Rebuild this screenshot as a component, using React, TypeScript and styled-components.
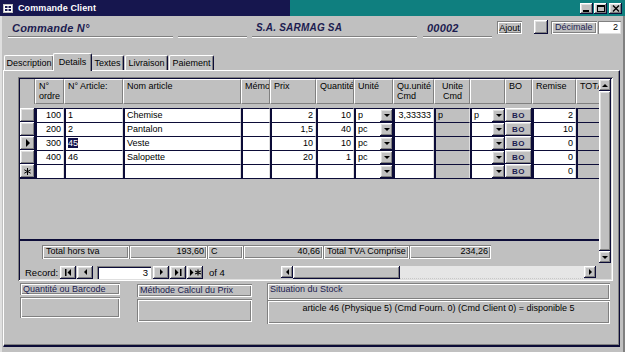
import React from 'react';
import styled, { createGlobalStyle, css } from 'styled-components';

const DARK = '#0c0c38';
const GREY = '#c0c0c0';
const SHADOW = '#808080';
const LIGHT = '#dfdfdf';

const GlobalStyle = createGlobalStyle`
  html, body { margin: 0; padding: 0; background: ${GREY}; }
  body { font-family: "Liberation Sans", Arial, sans-serif; font-size: 9px; color: #000; }
  * { box-sizing: border-box; }
`;

const raised = css`
  box-shadow: inset -1px -1px ${DARK}, inset 1px 1px #fff, inset -2px -2px ${SHADOW}, inset 2px 2px ${LIGHT};
`;
const sunken = css`
  box-shadow: inset 1px 1px ${SHADOW}, inset -1px -1px #fff, inset 2px 2px ${DARK}, inset -2px -2px ${LIGHT};
`;
const etched = css`
  box-shadow: inset 1px 1px ${SHADOW}, inset -1px -1px #fff, inset 2px 2px #fff, inset -2px -2px ${SHADOW};
`;

const Window = styled.div`
  width: 625px;
  height: 352px;
  overflow: hidden;
  background: ${GREY};
  display: flex;
  flex-direction: column;
`;

const TitleBar = styled.div`
  height: 16px;
  flex: none;
  display: flex;
  align-items: center;
  padding: 0 3px 0 3px;
  background: linear-gradient(to right, #16164e 0, #16164e 290px, #0f7f7f 290px, #0f7f7f 100%);
  color: #fff;
  font-weight: bold;
  font-size: 9px;
  gap: 5px;
`;

const TitleText = styled.span`
  flex: 1;
  letter-spacing: 0.1px;
`;

const TitleButtons = styled.div`
  display: flex;
  gap: 1px;
`;

const TitleButton = styled.div<{ $gapLeft?: number }>`
  width: 13px;
  height: 11px;
  background: ${GREY};
  ${raised};
  display: flex;
  align-items: center;
  justify-content: center;
  margin-left: ${(p) => p.$gapLeft || 0}px;
`;

const Body = styled.div`
  flex: 1;
  display: flex;
  flex-direction: column;
  border-left: 2px solid ${LIGHT};
  border-right: 2px solid ${SHADOW};
  min-height: 0;
`;

const HeaderRow = styled.div`
  height: 35px;
  flex: none;
  display: flex;
  align-items: flex-start;
  padding: 4px 0 0 6px;
`;

const HeaderField = styled.div<{ $w: number; $ml?: number; $size?: number }>`
  width: ${(p) => p.$w}px;
  margin-left: ${(p) => p.$ml || 0}px;
  height: 18px;
  border-bottom: 1px solid #fff;
  box-shadow: 0 -1px 0 0 ${SHADOW} inset;
  padding: 2px 0 0 4px;
  font-size: ${(p) => p.$size || 11}px;
  font-style: italic;
  font-weight: bold;
  color: #1c1c50;
  white-space: nowrap;
  letter-spacing: 0.2px;
`;

const SmallButton = styled.div<{ $w: number; $ml: number }>`
  width: ${(p) => p.$w}px;
  margin-left: ${(p) => p.$ml}px;
  margin-top: 1px;
  height: 13px;
  ${etched};
  display: flex;
  align-items: center;
  justify-content: center;
  font-size: 9px;
`;

const SquareButton = styled.div`
  width: 14px;
  height: 14px;
  margin-left: 12px;
  ${raised};
`;

const LabelBox = styled.div<{ $w: number; $ml: number }>`
  width: ${(p) => p.$w}px;
  margin-left: ${(p) => p.$ml}px;
  margin-top: 1px;
  height: 13px;
  ${etched};
  padding: 1px 0 0 4px;
  font-size: 9px;
  color: #1c1c50;
`;

const NumberInput = styled.div`
  width: 23px;
  height: 13px;
  margin-left: 1px;
  margin-top: 1px;
  background: #fff;
  box-shadow: inset 1px 1px ${SHADOW}, inset -1px -1px ${LIGHT};
  text-align: right;
  padding: 1px 3px 0 0;
  font-size: 9px;
`;

const TabStrip = styled.div`
  height: 19px;
  flex: none;
  display: flex;
  align-items: flex-end;
  padding-left: 2px;
`;

const Tab = styled.div<{ $w: number; $active?: boolean }>`
  width: ${(p) => p.$w}px;
  height: ${(p) => (p.$active ? 18 : 15)}px;
  margin: ${(p) => (p.$active ? '0 -1px 0 -2px' : '0 1px 0 0')};
  position: relative;
  z-index: ${(p) => (p.$active ? 2 : 1)};
  border-top: 1px solid #fff;
  border-left: 1px solid #fff;
  border-right: 1px solid ${DARK};
  border-radius: 2px 2px 0 0;
  box-shadow: inset -1px 0 ${SHADOW};
  background: ${GREY};
  display: flex;
  align-items: flex-start;
  justify-content: center;
  padding-top: ${(p) => (p.$active ? 3 : 2)}px;
  font-size: 9px;
  margin-bottom: ${(p) => (p.$active ? -1 : 0)}px;
`;

const TabPanel = styled.div`
  flex: none;
  height: 277px;
  width: 617px;
  margin-left: 1px;
  border-top: 1px solid #fff;
  border-left: 1px solid #fff;
  border-right: 1px solid ${DARK};
  border-bottom: 2px solid ${DARK};
  box-shadow: inset -1px -1px ${SHADOW};
  padding: 6px 0 0 14px;
  display: flex;
  flex-direction: column;
`;

const Subform = styled.div`
  width: 595px;
  height: 204px;
  ${sunken};
  padding: 2px;
  display: flex;
  flex-direction: column;
  flex: none;
`;

const SubBody = styled.div`
  display: flex;
  height: 184px;
`;

const SubContent = styled.div`
  width: 579px;
  overflow: hidden;
  display: flex;
  flex-direction: column;
`;

const COLS = '15px 29px 59px 118px 29px 46px 38px 39px 41px 36px 35px 27px 44px 40px';

const GridHeader = styled.div`
  display: grid;
  grid-template-columns: ${COLS};
  height: 29px;
  padding-bottom: 4px;
  flex: none;
`;

const HeadCell = styled.div<{ $center?: boolean }>`
  border-top: 1px solid #fff;
  border-left: 1px solid #fff;
  border-right: 1px solid ${SHADOW};
  border-bottom: 1px solid ${SHADOW};
  padding: 1px 2px 0 3px;
  line-height: 10px;
  text-align: ${(p) => (p.$center ? 'center' : 'left')};
  white-space: nowrap;
  overflow: hidden;
`;

const HeadBlank = styled.div`
  border-right: 1px solid ${SHADOW};
`;

const Row = styled.div`
  display: grid;
  grid-template-columns: ${COLS};
  height: 14px;
  flex: none;
`;

const Selector = styled.div`
  ${raised};
  background: ${GREY};
  display: flex;
  align-items: center;
  justify-content: center;
`;

const Cell = styled.div<{ $right?: boolean; $grey?: boolean }>`
  background: ${(p) => (p.$grey ? GREY : '#fff')};
  border-top: 1px solid ${DARK};
  border-left: 2px solid ${DARK};
  border-right: 1px solid ${LIGHT};
  text-align: ${(p) => (p.$right ? 'right' : 'left')};
  padding: 0 2px 0 2px;
  line-height: 12px;
  white-space: nowrap;
  overflow: hidden;
`;

const ComboCell = styled.div<{ $grey?: boolean }>`
  background: ${(p) => (p.$grey ? GREY : '#fff')};
  border-top: 1px solid ${DARK};
  border-left: 2px solid ${DARK};
  display: flex;
  line-height: 12px;
  overflow: hidden;
`;

const ComboText = styled.span`
  flex: 1;
  padding-left: 2px;
`;

const DropButton = styled.div`
  width: 13px;
  ${raised};
  background: ${GREY};
  display: flex;
  align-items: center;
  justify-content: center;
`;

const BoButton = styled.div`
  ${raised};
  background: ${GREY};
  display: flex;
  align-items: center;
  justify-content: center;
  font-weight: bold;
  font-size: 8px;
  color: #1c1c50;
  letter-spacing: 0.5px;
`;

const Selected = styled.span`
  background: #10104a;
  color: #fff;
`;

const DetailFill = styled.div`
  flex: 1;
  border-top: 1px solid ${DARK};
  border-bottom: 2px solid ${DARK};
`;

const Footer = styled.div`
  height: 22px;
  flex: none;
  display: flex;
  padding: 4px 0 0 22px;
`;

const FootBox = styled.div<{ $w: number; $right?: boolean }>`
  width: ${(p) => p.$w}px;
  height: 14px;
  ${etched};
  padding: 1px 3px 0 4px;
  text-align: ${(p) => (p.$right ? 'right' : 'left')};
  white-space: nowrap;
  overflow: hidden;
`;

const VScroll = styled.div`
  width: 12px;
  display: flex;
  flex-direction: column;
`;

const ScrollArrow = styled.div`
  width: 12px;
  height: 12px;
  flex: none;
  ${raised};
  background: ${GREY};
  display: flex;
  align-items: center;
  justify-content: center;
`;

const VThumb = styled.div`
  flex: 1;
  ${raised};
  background: ${GREY};
`;

const NavRow = styled.div`
  height: 16px;
  display: flex;
  align-items: center;
  padding-top: 2px;
`;

const NavLabel = styled.span`
  width: 40px;
  padding-left: 5px;
  font-size: 9.5px;
  flex: none;
`;

const NavButton = styled.div<{ $ml?: number }>`
  width: 16px;
  height: 13px;
  margin-left: ${(p) => p.$ml || 0}px;
  ${raised};
  background: ${GREY};
  display: flex;
  align-items: center;
  justify-content: center;
  flex: none;
`;

const NavInput = styled.div`
  width: 54px;
  height: 13px;
  margin: 0 2px 0 4px;
  background: #fff;
  box-shadow: inset 1px 1px ${SHADOW}, inset 2px 2px ${DARK};
  text-align: right;
  padding: 1px 3px 0 0;
  font-size: 9.5px;
  flex: none;
`;

const OfText = styled.span`
  width: 78px;
  padding-left: 6px;
  font-size: 9.5px;
  flex: none;
`;

const HScroll = styled.div`
  display: flex;
  height: 13px;
  width: 315px;
  flex: none;
`;

const HThumb = styled.div`
  width: 107px;
  ${raised};
  background: ${GREY};
`;

const HTrack = styled.div`
  flex: 1;
  background-color: #e6e6e6;
  background-image: repeating-linear-gradient(to right, #c8c8c8 0 1px, transparent 1px 2px);
  background-size: 100% 1px;
  background-repeat: no-repeat;
  background-position: bottom;
`;

const Bottom = styled.div`
  display: flex;
  margin: 2px 0 0 2px;
  align-items: flex-start;
`;

const Group = styled.div<{ $w: number; $ml?: number }>`
  width: ${(p) => p.$w}px;
  margin-left: ${(p) => p.$ml || 0}px;
  display: flex;
  flex-direction: column;
`;

const GroupLabel = styled.div<{ $h: number; $mt?: number }>`
  height: ${(p) => p.$h}px;
  margin-top: ${(p) => p.$mt || 0}px;
  ${etched};
  padding: 1px 0 0 3px;
  font-size: 9px;
  color: #1c1c50;
  white-space: nowrap;
  overflow: hidden;
`;

const GroupBox = styled.div<{ $h: number; $mt?: number; $center?: boolean }>`
  height: ${(p) => p.$h}px;
  margin-top: ${(p) => p.$mt || 0}px;
  ${etched};
  padding: 3px 0 0 0;
  text-align: ${(p) => (p.$center ? 'center' : 'left')};
  font-size: 9px;
  white-space: nowrap;
`;

const Tri = ({ dir, size = 4 }: { dir: 'up' | 'down' | 'left' | 'right'; size?: number }) => {
  const s = size;
  const pts =
    dir === 'down'
      ? `0,0 ${s * 2},0 ${s},${s}`
      : dir === 'up'
      ? `0,${s} ${s * 2},${s} ${s},0`
      : dir === 'right'
      ? `0,0 ${s},${s} 0,${s * 2}`
      : `${s},0 0,${s} ${s},${s * 2}`;
  const w = dir === 'down' || dir === 'up' ? s * 2 : s;
  const h = dir === 'down' || dir === 'up' ? s : s * 2;
  return (
    <svg width={w} height={h} viewBox={`0 0 ${w} ${h}`}>
      <polygon points={pts} fill="#000" />
    </svg>
  );
};

const NavIcon = ({ kind }: { kind: 'first' | 'prev' | 'next' | 'last' | 'new' }) => {
  if (kind === 'prev') return <Tri dir="left" size={3} />;
  if (kind === 'next') return <Tri dir="right" size={3} />;
  if (kind === 'first')
    return (
      <svg width="7" height="7" viewBox="0 0 7 7">
        <rect x="0" y="0" width="1.5" height="7" fill="#000" />
        <polygon points="6,0 2.5,3.5 6,7" fill="#000" />
      </svg>
    );
  if (kind === 'last')
    return (
      <svg width="7" height="7" viewBox="0 0 7 7">
        <polygon points="0,0 3.5,3.5 0,7" fill="#000" />
        <rect x="5" y="0" width="1.5" height="7" fill="#000" />
      </svg>
    );
  return (
    <svg width="11" height="7" viewBox="0 0 11 7">
      <polygon points="0,0 3.5,3.5 0,7" fill="#000" />
      <path d="M8 0.5v6M5.2 2l5.6 3M5.2 5l5.6-3" stroke="#000" strokeWidth="1.1" />
    </svg>
  );
};

const Star = () => (
  <svg width="7" height="7" viewBox="0 0 7 7">
    <path d="M3.5 0v7M0.3 1.8l6.4 3.4M0.3 5.2l6.4-3.4" stroke="#000" strokeWidth="1" />
  </svg>
);

type RowData = {
  ordre: string;
  art: string;
  nom: string;
  prix: string;
  qte: string;
  unite: string;
  qu: string;
  ucmd: string;
  u2: string;
  remise: string;
  current?: boolean;
  isNew?: boolean;
};

const rows: RowData[] = [
  { ordre: '100', art: '1', nom: 'Chemise', prix: '2', qte: '10', unite: 'p', qu: '3,33333', ucmd: 'p', u2: 'p', remise: '2' },
  { ordre: '200', art: '2', nom: 'Pantalon', prix: '1,5', qte: '40', unite: 'pc', qu: '', ucmd: '', u2: '', remise: '10' },
  { ordre: '300', art: '45', nom: 'Veste', prix: '10', qte: '10', unite: 'pc', qu: '', ucmd: '', u2: '', remise: '0', current: true },
  { ordre: '400', art: '46', nom: 'Salopette', prix: '20', qte: '1', unite: 'pc', qu: '', ucmd: '', u2: '', remise: '0' },
  { ordre: '', art: '', nom: '', prix: '', qte: '', unite: '', qu: '', ucmd: '', u2: '', remise: '0', isNew: true },
];

const DataRow = ({ r }: { r: RowData }) => (
  <Row>
    <Selector>{r.current ? <Tri dir="right" size={4} /> : r.isNew ? <Star /> : null}</Selector>
    <Cell $right>{r.ordre}</Cell>
    <Cell>{r.current ? <Selected>{r.art}</Selected> : r.art}</Cell>
    <Cell>{r.nom}</Cell>
    <Cell />
    <Cell $right>{r.prix}</Cell>
    <Cell $right>{r.qte}</Cell>
    <ComboCell>
      <ComboText>{r.unite}</ComboText>
      <DropButton>
        <Tri dir="down" size={3} />
      </DropButton>
    </ComboCell>
    <Cell $right>{r.qu}</Cell>
    <Cell $grey>{r.ucmd}</Cell>
    <ComboCell>
      <ComboText>{r.u2}</ComboText>
      <DropButton>
        <Tri dir="down" size={3} />
      </DropButton>
    </ComboCell>
    <BoButton>BO</BoButton>
    <Cell $right>{r.remise}</Cell>
    <Cell $grey />
  </Row>
);

export default function App() {
  return (
    <>
      <GlobalStyle />
      <Window>
        <TitleBar>
          <svg width="10" height="9" viewBox="0 0 10 9">
            <rect x="0.5" y="0.5" width="9" height="8" fill="#fff" stroke="#c0c0c0" />
            <rect x="2" y="2" width="2.5" height="2" fill="#16164e" />
            <rect x="5.5" y="2" width="2.5" height="2" fill="#16164e" />
            <rect x="2" y="5" width="2.5" height="2" fill="#16164e" />
            <rect x="5.5" y="5" width="2.5" height="2" fill="#16164e" />
          </svg>
          <TitleText>Commande Client</TitleText>
          <TitleButtons>
            <TitleButton>
              <svg width="7" height="7" viewBox="0 0 7 7">
                <rect x="0" y="5" width="6" height="2" fill="#000" />
              </svg>
            </TitleButton>
            <TitleButton>
              <svg width="8" height="7" viewBox="0 0 8 7">
                <rect x="0.5" y="0.5" width="7" height="6" fill="none" stroke="#000" />
                <rect x="0" y="0" width="8" height="2" fill="#000" />
              </svg>
            </TitleButton>
            <TitleButton $gapLeft={1}>
              <svg width="8" height="7" viewBox="0 0 8 7">
                <path d="M1 0.5l6 6M7 0.5l-6 6" stroke="#000" strokeWidth="1.4" />
              </svg>
            </TitleButton>
          </TitleButtons>
        </TitleBar>
        <Body>
          <HeaderRow>
            <HeaderField $w={165}>Commande N°</HeaderField>
            <HeaderField $w={69} $ml={5} />
            <HeaderField $w={165} $ml={5} $size={10}>S.A. SARMAG SA</HeaderField>
            <HeaderField $w={69} $ml={6}>00002</HeaderField>
            <SmallButton $w={25} $ml={5}>Ajout</SmallButton>
            <SquareButton />
            <LabelBox $w={46} $ml={3}>Décimale</LabelBox>
            <NumberInput>2</NumberInput>
          </HeaderRow>
          <TabStrip>
            <Tab $w={50}>Description</Tab>
            <Tab $w={39} $active>Details</Tab>
            <Tab $w={33}>Textes</Tab>
            <Tab $w={43}>Livraison</Tab>
            <Tab $w={45}>Paiement</Tab>
          </TabStrip>
          <TabPanel>
            <Subform>
              <SubBody>
                <SubContent>
                  <GridHeader>
                    <HeadBlank />
                    <HeadCell>
                      N°
                      <br />
                      ordre
                    </HeadCell>
                    <HeadCell>N° Article:</HeadCell>
                    <HeadCell>Nom article</HeadCell>
                    <HeadCell>Mémo</HeadCell>
                    <HeadCell>Prix</HeadCell>
                    <HeadCell>Quantité</HeadCell>
                    <HeadCell>Unité</HeadCell>
                    <HeadCell>
                      Qu.unité
                      <br />
                      Cmd
                    </HeadCell>
                    <HeadCell $center>
                      Unite
                      <br />
                      Cmd
                    </HeadCell>
                    <HeadCell />
                    <HeadCell>BO</HeadCell>
                    <HeadCell>Remise</HeadCell>
                    <HeadCell>TOTAL</HeadCell>
                  </GridHeader>
                  {rows.map((r, i) => (
                    <DataRow key={i} r={r} />
                  ))}
                  <DetailFill />
                  <Footer>
                    <FootBox $w={87}>Total hors tva</FootBox>
                    <FootBox $w={78} $right>193,60</FootBox>
                    <FootBox $w={36}>C</FootBox>
                    <FootBox $w={80} $right>40,66</FootBox>
                    <FootBox $w={86}>Total TVA Comprise</FootBox>
                    <FootBox $w={82} $right>234,26</FootBox>
                  </Footer>
                </SubContent>
                <VScroll>
                  <ScrollArrow>
                    <Tri dir="up" size={3} />
                  </ScrollArrow>
                  <VThumb />
                  <ScrollArrow>
                    <Tri dir="down" size={3} />
                  </ScrollArrow>
                </VScroll>
              </SubBody>
              <NavRow>
                <NavLabel>Record:</NavLabel>
                <NavButton>
                  <NavIcon kind="first" />
                </NavButton>
                <NavButton $ml={1}>
                  <NavIcon kind="prev" />
                </NavButton>
                <NavInput>3</NavInput>
                <NavButton>
                  <NavIcon kind="next" />
                </NavButton>
                <NavButton $ml={1}>
                  <NavIcon kind="last" />
                </NavButton>
                <NavButton $ml={1}>
                  <NavIcon kind="new" />
                </NavButton>
                <OfText>of 4</OfText>
                <HScroll>
                  <ScrollArrow>
                    <Tri dir="left" size={3} />
                  </ScrollArrow>
                  <HThumb />
                  <HTrack />
                  <ScrollArrow>
                    <Tri dir="right" size={3} />
                  </ScrollArrow>
                </HScroll>
              </NavRow>
            </Subform>
            <Bottom>
              <Group $w={100}>
                <GroupLabel $h={12}>Quantité ou Barcode</GroupLabel>
                <GroupBox $h={21} $mt={2} />
              </Group>
              <Group $w={115} $ml={17}>
                <GroupLabel $h={13} $mt={1}>Méthode Calcul du Prix</GroupLabel>
                <GroupBox $h={23} $mt={2} />
              </Group>
              <Group $w={343} $ml={15}>
                <GroupLabel $h={17}>Situation du Stock</GroupLabel>
                <GroupBox $h={24} $center>
                  article 46 (Physique 5) (Cmd Fourn. 0) (Cmd Client 0) = disponible 5
                </GroupBox>
              </Group>
            </Bottom>
          </TabPanel>
        </Body>
      </Window>
    </>
  );
}
